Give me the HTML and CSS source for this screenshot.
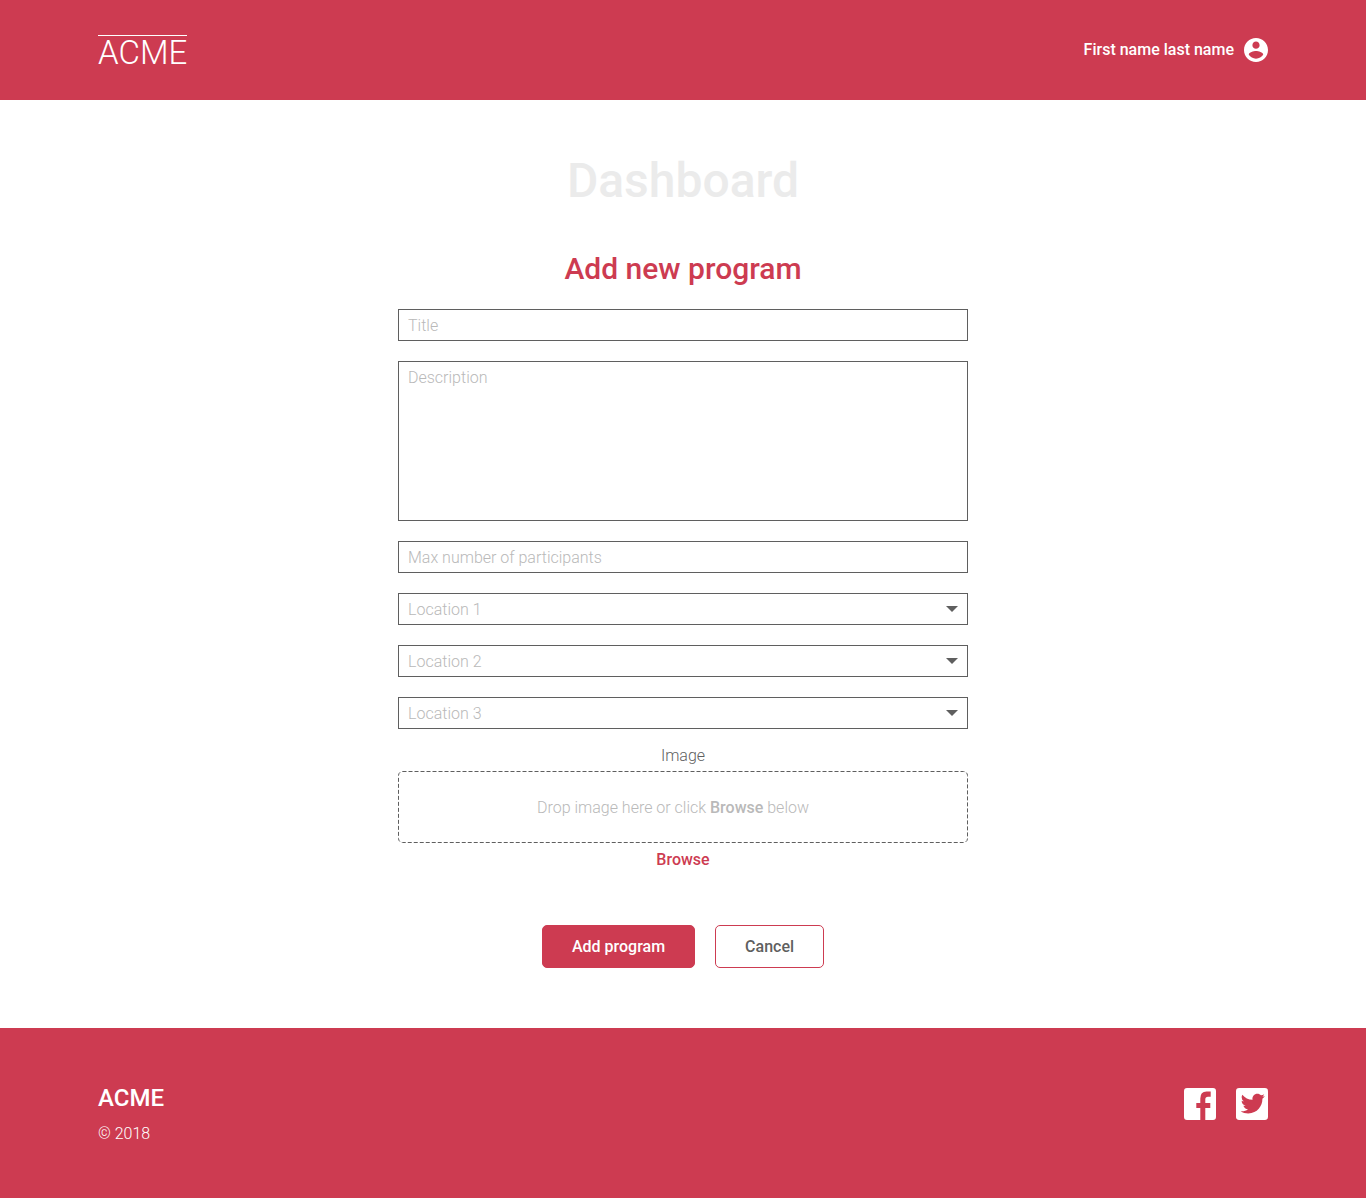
FILE: index.html
```html
<!DOCTYPE html>
<html lang="en">
<head>
<meta charset="utf-8">
<meta name="viewport" content="width=device-width, initial-scale=1">
<title>Add new program</title>
<link rel="stylesheet" href="styles.css">
</head>
<body>
<header class="site-header">
  <div class="container header-row">
    <a class="logo" href="#">ACME</a>
    <a class="user" href="#">First name last name
      <svg class="user-icon" viewBox="2 2 20 20" aria-hidden="true"><path fill="currentColor" d="M12 2C6.48 2 2 6.48 2 12s4.480 10 10 10 10-4.480 10-10S17.520 2 12 2zm0 3c1.660 0 3 1.340 3 3s-1.340 3-3 3-3-1.340-3-3 1.340-3 3-3zm0 14.200c-2.500 0-4.710-1.280-6-3.220.030-1.990 4-3.080 6-3.080 1.990 0 5.970 1.090 6 3.080-1.290 1.940-3.500 3.220-6 3.220z"/></svg>
    </a>
  </div>
</header>
<main class="main">
  <h1 class="page-title">Dashboard</h1>
  <h2 class="form-title">Add new program</h2>
  <form class="program-form">
    <input class="field" type="text" placeholder="Title" aria-label="Title">
    <textarea class="field field-area" placeholder="Description" aria-label="Description"></textarea>
    <input class="field" type="text" placeholder="Max number of participants" aria-label="Max number of participants">
    <select class="field field-select" aria-label="Location 1"><option>Location 1</option></select>
    <select class="field field-select" aria-label="Location 2"><option>Location 2</option></select>
    <select class="field field-select" aria-label="Location 3"><option>Location 3</option></select>
    <div class="upload">
      <span class="upload-label">Image</span>
      <div class="drop-zone">
        <svg class="drop-outline" aria-hidden="true"><rect class="drop-rect" rx="4"/></svg>
        <p class="drop-text">Drop image here or click <strong>Browse</strong> below</p>
      </div>
      <button class="browse" type="button">Browse</button>
    </div>
    <div class="actions">
      <button class="btn btn-primary" type="submit">Add program</button>
      <button class="btn btn-outline" type="button">Cancel</button>
    </div>
  </form>
</main>
<footer class="site-footer">
  <div class="container footer-row">
    <div>
      <p class="footer-brand">ACME</p>
      <p class="copyright">© 2018</p>
    </div>
    <nav class="social" aria-label="Social">
      <a class="social-link" href="#" aria-label="Facebook"><svg class="social-icon" viewBox="0 0 32 32"><path fill="currentColor" d="M3 0H29Q32 0 32 3V29Q32 32 29 32H21.300V20H26.300V15H21.300V11.500Q21.300 8.700 24 8.700H26.700V3.500H22.500Q16.300 3.500 16.300 10.500V15H12.300V20H16.300V32H3Q0 32 0 29V3Q0 0 3 0Z"/></svg></a>
      <a class="social-link" href="#" aria-label="Twitter"><svg class="social-icon" viewBox="0 0 448 448"><rect width="448" height="448" rx="44" fill="currentColor"/><path class="bird" transform="translate(-3 -19) scale(1.060)" d="M351.100 158.800c.2 2.800.2 5.700.2 8.500 0 86.700-66 186.600-186.600 186.600-37.200 0-71.700-10.800-100.700-29.400 5.300.6 10.400.8 15.800.8 30.700 0 58.900-10.400 81.400-28-28.800-.6-53-19.500-61.300-45.500 10.100 1.500 19.200 1.500 29.600-1.200-30-6.100-52.500-32.500-52.500-64.400v-.8c8.700 4.900 18.900 7.900 29.600 8.300a65.447 65.447 0 0 1-29.200-54.600c0-12.200 3.200-23.400 8.900-33.100 32.300 39.800 80.800 65.800 135.200 68.600-9.300-44.500 24-80.600 64-80.600 18.900 0 35.900 7.900 47.900 20.700 14.800-2.800 29-8.300 41.600-15.800-4.900 15.200-15.200 28-28.800 36.100 13.200-1.400 26-5.100 37.800-10.200-8.900 13.100-20.100 24.700-32.900 34z"/></svg></a>
    </nav>
  </div>
</footer>
</body>
</html>
```
FILE: styles.css
```css
:root {
  --brand: #cd3b51;
  --ink: #5f5f5f;
  --muted: #b9b9b9;
}

* {
  box-sizing: border-box;
  margin: 0;
}

body {
  min-height: 100vh;
  display: flex;
  flex-direction: column;
  background: #fff;
  color: var(--ink);
  font: 300 16px/20px Roboto, sans-serif;
}

a {
  color: inherit;
  text-decoration: none;
}

.container {
  max-width: 1170px;
  margin: 0 auto;
}

.site-header,
.site-footer {
  background: var(--brand);
  color: #fff;
}

.header-row {
  min-height: 100px;
  display: flex;
  align-items: center;
  justify-content: space-between;
}

.logo {
  margin-top: 5px;
  border-top: 1px solid #fff;
  font-size: 33px;
  line-height: 34px;
}

.user {
  display: flex;
  align-items: center;
  gap: 10px;
  font-weight: 500;
}

.user-icon {
  width: 24px;
  height: 24px;
}

.main {
  flex: 1;
  padding: 51px 0 60px;
  text-align: center;
}

.page-title {
  color: #ebebeb;
  font-size: 48px;
  font-weight: 500;
  line-height: 60px;
}

.form-title {
  margin: 38px 0 20px;
  color: var(--brand);
  font-size: 30px;
  font-weight: 500;
  line-height: 40px;
}

.program-form {
  max-width: 570px;
  margin: 0 auto;
  display: flex;
  flex-direction: column;
  gap: 20px;
}

.field {
  width: 100%;
  height: 32px;
  padding: 5px 9px;
  border: 1px solid var(--ink);
  border-radius: 0;
  background: #fff;
  color: var(--ink);
  font: inherit;
}

.field::placeholder {
  color: var(--muted);
  opacity: 1;
}

.field-area {
  height: 160px;
  padding-top: 6px;
  resize: none;
}

.field-select {
  padding: 6px 9px 4px;
  appearance: none;
  color: var(--muted);
  background: url("data:image/svg+xml,%3Csvg xmlns='http://www.w3.org/2000/svg' width='12' height='6'%3E%3Cpath d='M0 0h12L6 6z' fill='%235f5f5f'/%3E%3C/svg%3E") no-repeat right 9px center;
}

.upload {
  margin-top: -3px;
}

.upload-label {
  display: block;
  margin-bottom: 5px;
}

.drop-zone {
  position: relative;
  padding: 27px 20px 25px;
}

.drop-outline {
  position: absolute;
  inset: 0;
  width: 100%;
  height: 100%;
}

.drop-rect {
  x: 0.5px;
  y: 0.5px;
  width: calc(100% - 1px);
  height: calc(100% - 1px);
  fill: none;
  stroke: var(--ink);
  stroke-dasharray: 4 2;
}

.drop-text {
  padding-right: 20px;
  color: var(--muted);
}

.drop-text strong {
  font-weight: 500;
}

.browse {
  margin-top: 7px;
  padding: 0;
  border: 0;
  background: none;
  color: var(--brand);
  font: inherit;
  font-weight: 500;
}

.actions {
  margin-top: 35px;
  display: flex;
  justify-content: center;
  gap: 20px;
}

.btn {
  padding: 11px 29px 10px;
  border: 1px solid var(--brand);
  border-radius: 5px;
  font: inherit;
  font-weight: 500;
}

.btn-primary {
  background: var(--brand);
  color: #fff;
}

.btn-outline {
  background: #fff;
  color: var(--ink);
}

.footer-row {
  min-height: 170px;
  padding: 55px 0 50px;
  display: flex;
  justify-content: space-between;
}

.footer-brand {
  font-size: 24px;
  font-weight: 500;
  line-height: 30px;
}

.copyright {
  margin-top: 11px;
}

.social {
  padding-top: 5px;
  display: flex;
  gap: 20px;
}

.social-link {
  height: 32px;
}

.social-icon {
  display: block;
  width: 32px;
  height: 32px;
}

.bird {
  fill: var(--brand);
}
```
